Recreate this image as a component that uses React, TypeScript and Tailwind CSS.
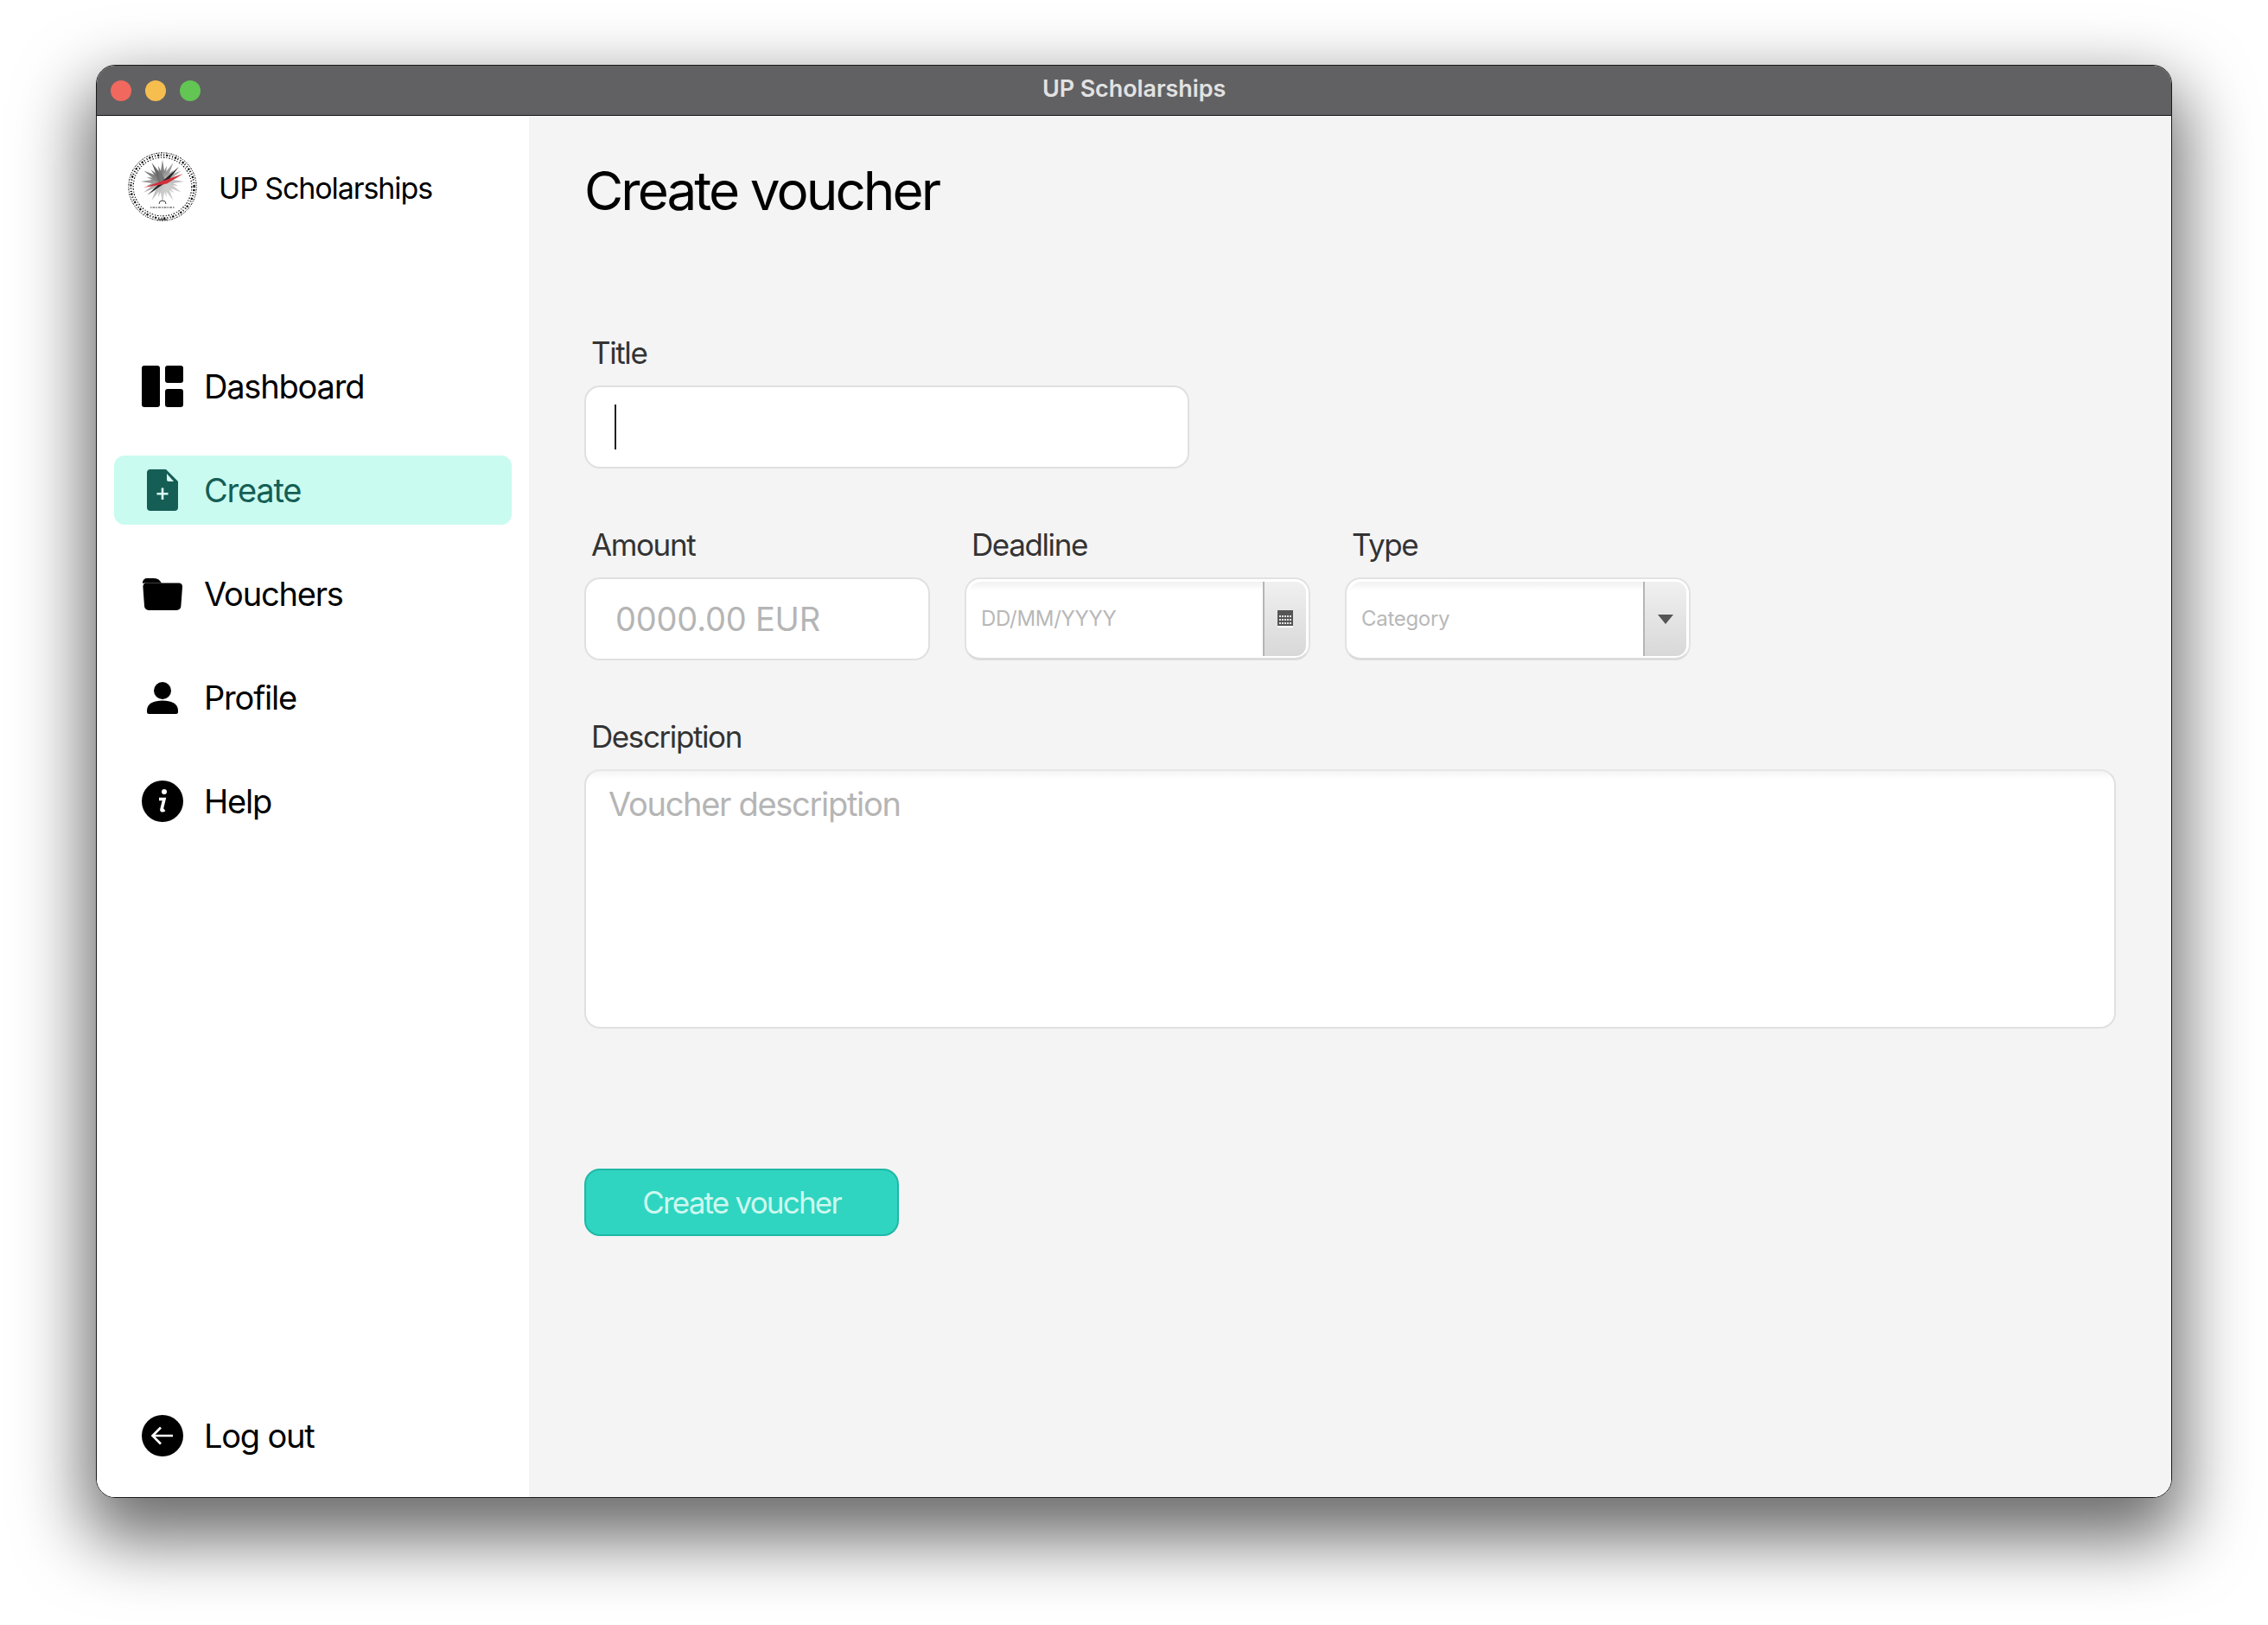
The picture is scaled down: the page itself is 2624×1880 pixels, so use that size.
import type { ReactNode } from "react";

function DashboardIcon() {
  return (
    <svg width="48" height="48" viewBox="0 0 48 48" fill="currentColor">
      <rect x="0" y="0" width="21" height="48" rx="3" />
      <rect x="27" y="0" width="21" height="20" rx="3" />
      <rect x="27" y="27" width="21" height="21" rx="3" />
    </svg>
  );
}

function FileIcon() {
  return (
    <svg width="36" height="48" viewBox="0 0 36 48">
      <path d="M4 0H22L36 14V44a4 4 0 0 1-4 4H4a4 4 0 0 1-4-4V4a4 4 0 0 1 4-4Z" fill="#155e55" />
      <path d="M23 5L31 14H25a2 2 0 0 1-2-2Z" fill="#d8fbf3" />
      <path d="M18 21.500V35M11.500 28.200H24.500" stroke="#d8fbf3" strokeWidth="2.600" />
    </svg>
  );
}

function FolderIcon() {
  return (
    <svg width="46" height="38" viewBox="0 0 46 38" fill="currentColor">
      <path d="M0 6a5 5 0 0 1 5-5H13c3 0 5 .8 7 3l2 2.500H2a4 4 0 0 0-2 .6Z" />
      <path d="M3 6.500H42a4 4 0 0 1 4 4.400L44.400 33a5 5 0 0 1-5 5H7A5 5 0 0 1 2 33L.4 10.500A4 4 0 0 1 3 6.500Z" />
    </svg>
  );
}

function PersonIcon() {
  return (
    <svg width="36" height="37" viewBox="0 0 36 37" fill="currentColor">
      <circle cx="18" cy="10" r="10" />
      <path d="M0 33c0-8 8-11.500 18-11.500S36 25 36 33v1.500A2.500 2.500 0 0 1 33.500 37H2.500A2.500 2.500 0 0 1 0 34.500Z" />
    </svg>
  );
}

function InfoIcon() {
  return (
    <svg width="48" height="48" viewBox="0 0 48 48">
      <circle cx="24" cy="24" r="24" fill="#000" />
      <circle cx="26" cy="13" r="3" fill="#fff" />
      <path d="M20 21.500h6L23 33.500c-.3 1.500 1 1.800 3.500.5" fill="none" stroke="#fff" strokeWidth="3.600" />
    </svg>
  );
}

function LogoutIcon() {
  return (
    <svg width="48" height="48" viewBox="0 0 48 48">
      <circle cx="24" cy="24" r="24" fill="#000" />
      <path d="M36 24H13M22 14.500L12.500 24L22 33.500" fill="none" stroke="#fff" strokeWidth="2.600" />
    </svg>
  );
}

// seal: dashed rings stand in for the lettering, rays fade round the star
function Logo() {
  const rays = Array.from({ length: 24 }, (_, i) => i * 15);
  return (
    <svg width="80" height="80" viewBox="0 0 80 80">
      <circle cx="40" cy="40" r="39.200" fill="none" stroke="#000" strokeWidth="1" strokeDasharray="1.200 1.400 2 1.200" />
      <circle cx="40" cy="40" r="36.600" fill="none" stroke="#000" strokeWidth="2.200" strokeDasharray="1 2 2.200 1.600 1 2.400" />
      <circle cx="40" cy="40" r="33.800" fill="none" stroke="#000" strokeWidth="1.200" strokeDasharray="1.600 1.800 1 2" />
      {rays.map((a, i) => {
        // light on the left, dark towards the bottom
        const g = 105 + Math.round(Math.abs(Math.sin(((a + 30) * Math.PI) / 360)) * 100);
        return (
          <path
            key={a}
            d={i % 2 ? "M36.500 34L40 15L43.500 34Z" : "M36 34L40 9L44 34Z"}
            fill={`rgb(${g},${g},${g})`}
            transform={`rotate(${a} 40 34)`}
          />
        );
      })}
      <path d="M22 50L59 17L46 33.500Z M22 50L59 17L36 37Z" fill="#2a2424" />
      <path d="M18 41L64 25L45 36.500Z M18 41L64 25L35 37.500Z" fill="#d2303a" />
      <path d="M36 60a4 4 0 0 1 8 0" fill="none" stroke="#444" strokeWidth="1" />
      <path d="M26 64h28" stroke="#333" strokeWidth="1" strokeDasharray="1.500 1 3 1" />
      <path d="M35 78h10" stroke="#000" strokeWidth="1.200" />
    </svg>
  );
}

type NavItemProps = { icon: ReactNode; label: string; active?: boolean };

function NavItem({ icon, label, active }: NavItemProps) {
  return (
    <div
      className={
        active
          ? "flex h-[80px] items-center rounded-[12px] bg-[#cafbf0] text-[#155e55]"
          : "flex h-[80px] items-center rounded-[12px] text-black"
      }
    >
      <div className="flex w-[104px] shrink-0 justify-center pl-[7px]">{icon}</div>
      <span className="text-[38px] leading-none tracking-[-1.2px]">{label}</span>
    </div>
  );
}

function FieldLabel({ children }: { children: ReactNode }) {
  return <div className="h-[48px] pl-[8px] text-[35px] leading-[48px] tracking-[-1.4px] text-[#333333]">{children}</div>;
}

function SpinnerField({ text, icon }: { text: string; icon: ReactNode }) {
  return (
    <div className="flex h-[96px] w-[400px] rounded-[18px] border-[2px] border-[#e2e2e2] border-b-[3px] border-b-[#dcdcdc] bg-white p-[3px] pb-[2px]">
      <div className="flex flex-1 items-center rounded-l-[14px] bg-gradient-to-b from-[#f1f1f1] via-white via-[12%] to-white pl-[14px] text-[24px] tracking-[-0.3px] text-[#b8b8b8]">
        {text}
      </div>
      <div className="flex w-[50px] items-center justify-center rounded-r-[12px] border-l-[2px] border-[#b5b5b5] bg-gradient-to-b from-[#f0f0f0] to-[#d8d8d8]">
        {icon}
      </div>
    </div>
  );
}

function CalendarIcon() {
  return (
    <svg width="18" height="20" viewBox="0 0 18 20">
      <rect width="18" height="18" fill="#555555" />
      <rect y="18" width="18" height="2" fill="#ffffff" />
      <path d="M2 7h14M2 11h14M2 15h14" stroke="#e6e6e6" strokeWidth="2" strokeDasharray="2 1" />
    </svg>
  );
}

function CaretIcon() {
  return (
    <svg width="18" height="11" viewBox="0 0 18 11">
      <path d="M0 0H18L9 11Z" fill="#555555" />
    </svg>
  );
}

export default function App() {
  return (
    <div className="h-[1880px] w-[2624px] overflow-hidden bg-white pl-[111px] pt-[75px] font-['Inter',sans-serif]">
      <div className="flex h-[1658px] w-[2402px] flex-col overflow-hidden rounded-[22px] border-[1.500px] border-[#1a1a1a] shadow-[0_36px_80px_12px_rgba(0,0,0,0.58)]">
        <div className="relative flex h-[58px] shrink-0 items-center gap-[16px] border-b-[1.500px] border-[#111] bg-[#616163] pl-[16px]">
          <div className="h-[24px] w-[24px] rounded-full bg-[#f1685e]" />
          <div className="h-[24px] w-[24px] rounded-full bg-[#f6bd4f]" />
          <div className="h-[24px] w-[24px] rounded-full bg-[#62c554]" />
          <div className="absolute inset-x-0 top-[11px] text-center text-[27px] font-semibold leading-[32px] tracking-[-0.1px] text-[#e2e2e2]">
            UP Scholarships
          </div>
        </div>

        <div className="flex min-h-0 flex-1">
          <aside className="flex w-[500px] shrink-0 flex-col bg-white pb-[31px] pl-[20px] pr-[20px]">
            <div className="mt-[42px] flex h-[80px] items-center pl-[16px]">
              <Logo />
              <span className="ml-[25px] mt-[4px] text-[34px] leading-none tracking-[-1.1px] text-black">UP Scholarships</span>
            </div>
            <nav className="mt-[151px] flex flex-col gap-[40px]">
              <NavItem icon={<DashboardIcon />} label="Dashboard" />
              <NavItem icon={<FileIcon />} label="Create" active />
              <NavItem icon={<FolderIcon />} label="Vouchers" />
              <NavItem icon={<PersonIcon />} label="Profile" />
              <NavItem icon={<InfoIcon />} label="Help" />
            </nav>
            <div className="mt-auto">
              <NavItem icon={<LogoutIcon />} label="Log out" />
            </div>
          </aside>

          <main className="flex min-w-0 flex-1 flex-col bg-[#f4f4f4] pl-[64px] pr-[64px]">
            <h1 className="mt-[49px] text-[62px] font-normal leading-[76px] tracking-[-2.950px] text-black">Create voucher</h1>

            <div className="mt-[125px]">
              <FieldLabel>Title</FieldLabel>
              <div className="relative mt-[14px] h-[96px] w-[700px] rounded-[18px] border-[2px] border-[#e0e0e0] bg-white">
                <div className="absolute left-[33px] top-[20px] h-[52px] w-[2px] bg-[#222]" />
              </div>
            </div>

            <div className="mt-[64px] flex gap-[40px]">
              <div>
                <FieldLabel>Amount</FieldLabel>
                <div className="mt-[14px] flex h-[96px] w-[400px] items-center rounded-[18px] border-[2px] border-[#e0e0e0] bg-white pl-[34px] text-[38px] tracking-[-0.2px] text-[#b5b5b5]">
                  0000.00 EUR
                </div>
              </div>
              <div>
                <FieldLabel>Deadline</FieldLabel>
                <div className="mt-[14px]">
                  <SpinnerField text="DD/MM/YYYY" icon={<CalendarIcon />} />
                </div>
              </div>
              <div>
                <FieldLabel>Type</FieldLabel>
                <div className="mt-[14px]">
                  <SpinnerField text="Category" icon={<CaretIcon />} />
                </div>
              </div>
            </div>

            <div className="mt-[64px]">
              <FieldLabel>Description</FieldLabel>
              <div className="mt-[14px] h-[300px] rounded-[18px] border-[2px] border-[#e0e0e0] border-t-[#e6e6e6] bg-gradient-to-b from-[#f4f4f4] via-white via-[3%] to-white pl-[26px] pt-[14px] text-[38px] leading-[48px] tracking-[-1.3px] text-[#b5b5b5]">
                Voucher description
              </div>
            </div>

            <button className="mt-[162px] flex h-[78px] w-[364px] items-center justify-center rounded-[18px] border-[2px] border-[#1fb8a6] bg-[#2fd5c0] text-[35px] tracking-[-1.8px] text-[#cdf8ef]">
              Create voucher
            </button>
          </main>
        </div>
      </div>
    </div>
  );
}
